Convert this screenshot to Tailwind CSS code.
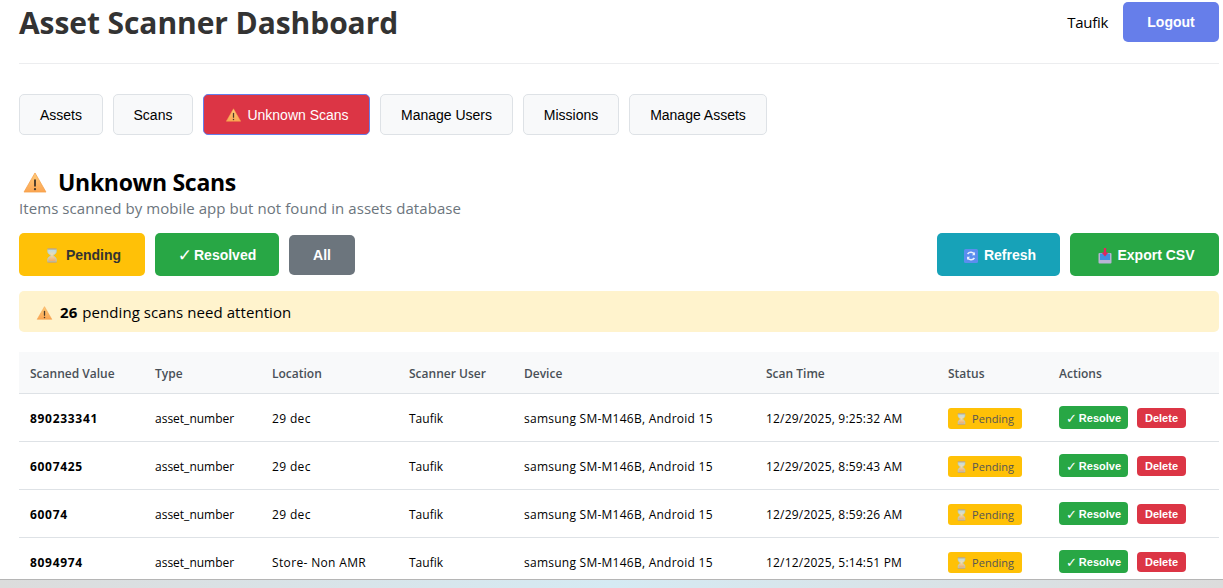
<!DOCTYPE html>
<html lang="en">
<head>
<meta charset="utf-8">
<title>Asset Scanner Dashboard</title>
<script src="https://cdn.jsdelivr.net/npm/@tailwindcss/browser@4"></script>
</head>
<body class="m-0 h-[588px] w-[1223px] overflow-hidden bg-white font-['Open_Sans',sans-serif] text-black">
<svg class="absolute h-0 w-0">
  <defs>
    <linearGradient id="warn" x1="0" y1="0" x2="0" y2="1"><stop offset="0" stop-color="#ffcb7a"/><stop offset="1" stop-color="#fba552"/></linearGradient>
    <linearGradient id="glass" x1="0" y1="0" x2="0" y2="1"><stop offset="0" stop-color="#b5dbe9"/><stop offset="0.45" stop-color="#f3dcae"/><stop offset="1" stop-color="#eda766"/></linearGradient>
    <symbol id="warning" viewBox="0 0 24 22"><path d="M12 1 L23.5 21 H0.5 Z" fill="url(#warn)" stroke="#f4a04a" stroke-width="0.8" stroke-linejoin="round"/><rect x="11" y="7.5" width="2" height="8" rx="1" fill="#4a3a2a"/><circle cx="12" cy="18" r="1.2" fill="#4a3a2a"/></symbol>
    <symbol id="hourglass" viewBox="0 0 14 16"><path d="M2.5 1.5 H11.5 V4 C11.5 6.5 8.3 7 8.3 8 C8.3 9 11.5 9.5 11.5 12 V14.5 H2.5 V12 C2.5 9.5 5.7 9 5.7 8 C5.7 7 2.5 6.5 2.5 4 Z" fill="url(#glass)" stroke="#a9cfdc" stroke-width="0.9"/><rect x="2" y="0.3" width="10" height="1.2" rx="0.5" fill="#c2a57e"/><rect x="2" y="14.5" width="10" height="1.2" rx="0.5" fill="#c2a57e"/></symbol>
    <symbol id="refresh" viewBox="0 0 14 14"><rect width="14" height="14" rx="1.5" fill="#5b8def"/><path d="M10.5 5.5 A4 4 0 0 0 3.6 5 M3.5 8.5 A4 4 0 0 0 10.4 9" fill="none" stroke="#e8f0fd" stroke-width="1.5"/><path d="M10.9 3 V6.2 H7.9 Z M3.1 11 V7.8 H6.1 Z" fill="#e8f0fd"/></symbol>
    <symbol id="outbox" viewBox="0 0 14 16"><rect x="0.5" y="5" width="13" height="10.5" rx="1" fill="#b8b4d4"/><rect x="2" y="5.5" width="10" height="6.5" fill="#3f8fe0"/><rect x="5.8" y="0" width="2.4" height="5" fill="#e0245e"/><path d="M3.6 4.5 H10.4 L7 8.5 Z" fill="#e0245e"/></symbol>
  </defs>
</svg>

<div class="h-[579px] overflow-hidden pr-[4px] pl-[19px]">
  <header class="flex h-[64px] items-start justify-between border-b border-[#ecedef]">
    <h1 class="m-0 text-[30px] leading-[46px] font-bold tracking-[-0.08px] text-[#333333]">Asset Scanner Dashboard</h1>
    <div class="mt-[2px] flex items-center gap-[15px]">
      <span class="text-[15px] tracking-[-0.3px]">Taufik</span>
      <button class="h-[40px] w-[96px] rounded-[5px] bg-[#667eea] font-['Liberation_Sans',sans-serif] text-[14px] font-bold text-white">Logout</button>
    </div>
  </header>

  <nav class="mt-[30px] flex gap-[10px] font-['Liberation_Sans',sans-serif] text-[14px]">
    <button class="h-[41px] w-[84px] rounded-[5px] border border-[#dee2e6] bg-[#f8f9fa] pt-[1px]">Assets</button>
    <button class="h-[41px] w-[80px] rounded-[5px] border border-[#dee2e6] bg-[#f8f9fa] pt-[1px]">Scans</button>
    <button class="flex h-[41px] w-[167px] items-center justify-center gap-[6px] rounded-[5px] border border-[#667eea] bg-[#dc3545] pt-[1px] pl-[2px] text-white"><svg class="h-[14px] w-[15px]"><use href="#warning"/></svg>Unknown Scans</button>
    <button class="h-[41px] w-[133px] rounded-[5px] border border-[#dee2e6] bg-[#f8f9fa] pt-[1px]">Manage Users</button>
    <button class="h-[41px] w-[96px] rounded-[5px] border border-[#dee2e6] bg-[#f8f9fa] pt-[1px]">Missions</button>
    <button class="h-[41px] w-[138px] rounded-[5px] border border-[#dee2e6] bg-[#f8f9fa] pt-[1px]">Manage Assets</button>
  </nav>

  <section class="mt-[31px]">
    <div class="flex h-[32px] items-center">
      <svg class="ml-[4px] h-[21px] w-[24px]"><use href="#warning"/></svg>
      <h2 class="m-0 ml-[11px] text-[23px] leading-[32px] font-bold tracking-[-0.3px]">Unknown Scans</h2>
    </div>
    <p class="m-0 text-[15px] leading-[20px] tracking-[0.07px] text-[#6c757d]">Items scanned by mobile app but not found in assets database</p>

    <div class="mt-[15px] flex items-start justify-between font-['Liberation_Sans',sans-serif] text-[14px] font-bold">
      <div class="flex items-start gap-[10px]">
        <button class="flex h-[43px] w-[126px] items-center justify-center gap-[7px] rounded-[5px] bg-[#ffc107] pt-[2px] pl-[2px] text-[#333333]"><svg class="h-[15px] w-[14px]"><use href="#hourglass"/></svg>Pending</button>
        <button class="flex h-[43px] w-[124px] items-center justify-center gap-[2px] rounded-[5px] bg-[#28a745] pt-[2px] text-white"><span class="font-['DejaVu_Sans',sans-serif] text-[17px] leading-none">✓</span>Resolved</button>
        <button class="mt-[2px] h-[40px] w-[66px] rounded-[5px] bg-[#6c757d] text-white">All</button>
      </div>
      <div class="flex gap-[10px]">
        <button class="flex h-[43px] w-[123px] items-center justify-center gap-[6px] rounded-[5px] bg-[#17a2b8] pt-[2px] pl-[3px] text-white"><svg class="h-[14px] w-[14px]"><use href="#refresh"/></svg>Refresh</button>
        <button class="flex h-[43px] w-[149px] items-center justify-center gap-[5px] rounded-[5px] bg-[#28a745] pt-[2px] pl-[4px] text-white"><svg class="h-[16px] w-[14px]"><use href="#outbox"/></svg>Export CSV</button>
      </div>
    </div>

    <div class="mt-[15px] flex h-[41px] items-center rounded-[5px] bg-[#fff3cd] px-[17px] pt-[2px] text-[15px] tracking-[0.07px]">
      <svg class="mr-[7px] h-[14px] w-[17px]"><use href="#warning"/></svg><b class="mr-[5px] font-bold">26</b>pending scans need attention
    </div>

    <table class="mt-[20px] w-[1200px] table-fixed border-collapse text-left text-[12px]">
      <colgroup>
        <col class="w-[124px]"><col class="w-[117px]"><col class="w-[137px]"><col class="w-[115px]"><col class="w-[242px]"><col class="w-[182px]"><col class="w-[111px]"><col class="w-[172px]">
      </colgroup>
      <thead class="bg-[#f8f9fa] text-[#495057]">
        <tr class="h-[41px] border-b border-[#dee2e6]">
          <th class="pt-[3px] pr-[12px] pl-[11px] font-semibold">Scanned Value</th><th class="px-[12px] pt-[3px] font-semibold">Type</th><th class="px-[12px] pt-[3px] font-semibold">Location</th><th class="px-[12px] pt-[3px] font-semibold">Scanner User</th><th class="px-[12px] pt-[3px] font-semibold">Device</th><th class="px-[12px] pt-[3px] font-semibold">Scan Time</th><th class="px-[12px] pt-[3px] font-semibold">Status</th><th class="px-[12px] pt-[3px] font-semibold">Actions</th>
        </tr>
      </thead>
      <tbody>
        <tr class="h-[48px] border-b border-[#dee2e6]">
          <td class="pt-[4px] pr-[12px] pl-[11px] font-bold tracking-[0.7px]">890233341</td><td class="px-[12px] pt-[4px]">asset_number</td><td class="px-[12px] pt-[4px] tracking-[0.35px]">29 dec</td><td class="px-[12px] pt-[4px]">Taufik</td><td class="px-[12px] pt-[4px] tracking-[0.25px]">samsung SM-M146B, Android 15</td><td class="px-[12px] pt-[4px] tracking-[0.2px]">12/29/2025, 9:25:32 AM</td>
          <td class="px-[12px] pt-[2px]"><span class="flex h-[21px] w-[74px] items-center justify-center gap-[5px] rounded-[3px] bg-[#ffc107] pt-[2px] text-[11px] text-[#555555]"><svg class="h-[12px] w-[11px]"><use href="#hourglass"/></svg>Pending</span></td>
          <td class="px-[12px]"><div class="flex items-center gap-[9px] font-['Liberation_Sans',sans-serif] text-[11px] font-bold text-white"><button class="flex h-[23px] w-[69px] items-center justify-center gap-[2px] rounded-[4px] bg-[#28a745] pt-[2px]"><span class="font-['DejaVu_Sans',sans-serif] text-[13px] leading-none">✓</span>Resolve</button><button class="mt-[2px] h-[20px] w-[49px] rounded-[4px] bg-[#dc3545]">Delete</button></div></td>
        </tr>
        <tr class="h-[48px] border-b border-[#dee2e6]">
          <td class="pt-[4px] pr-[12px] pl-[11px] font-bold tracking-[0.7px]">6007425</td><td class="px-[12px] pt-[4px]">asset_number</td><td class="px-[12px] pt-[4px] tracking-[0.35px]">29 dec</td><td class="px-[12px] pt-[4px]">Taufik</td><td class="px-[12px] pt-[4px] tracking-[0.25px]">samsung SM-M146B, Android 15</td><td class="px-[12px] pt-[4px] tracking-[0.2px]">12/29/2025, 8:59:43 AM</td>
          <td class="px-[12px] pt-[2px]"><span class="flex h-[21px] w-[74px] items-center justify-center gap-[5px] rounded-[3px] bg-[#ffc107] pt-[2px] text-[11px] text-[#555555]"><svg class="h-[12px] w-[11px]"><use href="#hourglass"/></svg>Pending</span></td>
          <td class="px-[12px]"><div class="flex items-center gap-[9px] font-['Liberation_Sans',sans-serif] text-[11px] font-bold text-white"><button class="flex h-[23px] w-[69px] items-center justify-center gap-[2px] rounded-[4px] bg-[#28a745] pt-[2px]"><span class="font-['DejaVu_Sans',sans-serif] text-[13px] leading-none">✓</span>Resolve</button><button class="mt-[2px] h-[20px] w-[49px] rounded-[4px] bg-[#dc3545]">Delete</button></div></td>
        </tr>
        <tr class="h-[48px] border-b border-[#dee2e6]">
          <td class="pt-[4px] pr-[12px] pl-[11px] font-bold tracking-[0.7px]">60074</td><td class="px-[12px] pt-[4px]">asset_number</td><td class="px-[12px] pt-[4px] tracking-[0.35px]">29 dec</td><td class="px-[12px] pt-[4px]">Taufik</td><td class="px-[12px] pt-[4px] tracking-[0.25px]">samsung SM-M146B, Android 15</td><td class="px-[12px] pt-[4px] tracking-[0.2px]">12/29/2025, 8:59:26 AM</td>
          <td class="px-[12px] pt-[2px]"><span class="flex h-[21px] w-[74px] items-center justify-center gap-[5px] rounded-[3px] bg-[#ffc107] pt-[2px] text-[11px] text-[#555555]"><svg class="h-[12px] w-[11px]"><use href="#hourglass"/></svg>Pending</span></td>
          <td class="px-[12px]"><div class="flex items-center gap-[9px] font-['Liberation_Sans',sans-serif] text-[11px] font-bold text-white"><button class="flex h-[23px] w-[69px] items-center justify-center gap-[2px] rounded-[4px] bg-[#28a745] pt-[2px]"><span class="font-['DejaVu_Sans',sans-serif] text-[13px] leading-none">✓</span>Resolve</button><button class="mt-[2px] h-[20px] w-[49px] rounded-[4px] bg-[#dc3545]">Delete</button></div></td>
        </tr>
        <tr class="h-[48px] border-b border-[#dee2e6]">
          <td class="pt-[4px] pr-[12px] pl-[11px] font-bold tracking-[0.7px]">8094974</td><td class="px-[12px] pt-[4px]">asset_number</td><td class="px-[12px] pt-[4px] tracking-[0.35px]">Store- Non AMR</td><td class="px-[12px] pt-[4px]">Taufik</td><td class="px-[12px] pt-[4px] tracking-[0.25px]">samsung SM-M146B, Android 15</td><td class="px-[12px] pt-[4px] tracking-[0.2px]">12/12/2025, 5:14:51 PM</td>
          <td class="px-[12px] pt-[2px]"><span class="flex h-[21px] w-[74px] items-center justify-center gap-[5px] rounded-[3px] bg-[#ffc107] pt-[2px] text-[11px] text-[#555555]"><svg class="h-[12px] w-[11px]"><use href="#hourglass"/></svg>Pending</span></td>
          <td class="px-[12px]"><div class="flex items-center gap-[9px] font-['Liberation_Sans',sans-serif] text-[11px] font-bold text-white"><button class="flex h-[23px] w-[69px] items-center justify-center gap-[2px] rounded-[4px] bg-[#28a745] pt-[2px]"><span class="font-['DejaVu_Sans',sans-serif] text-[13px] leading-none">✓</span>Resolve</button><button class="mt-[2px] h-[20px] w-[49px] rounded-[4px] bg-[#dc3545]">Delete</button></div></td>
        </tr>
      </tbody>
    </table>
  </section>
</div>
<div class="h-[9px] border-t border-[#b5b5b5] bg-gradient-to-r from-[#dcdcdc] via-[#d5eaf3] to-[#dcdcdc]"></div>
</body>
</html>
